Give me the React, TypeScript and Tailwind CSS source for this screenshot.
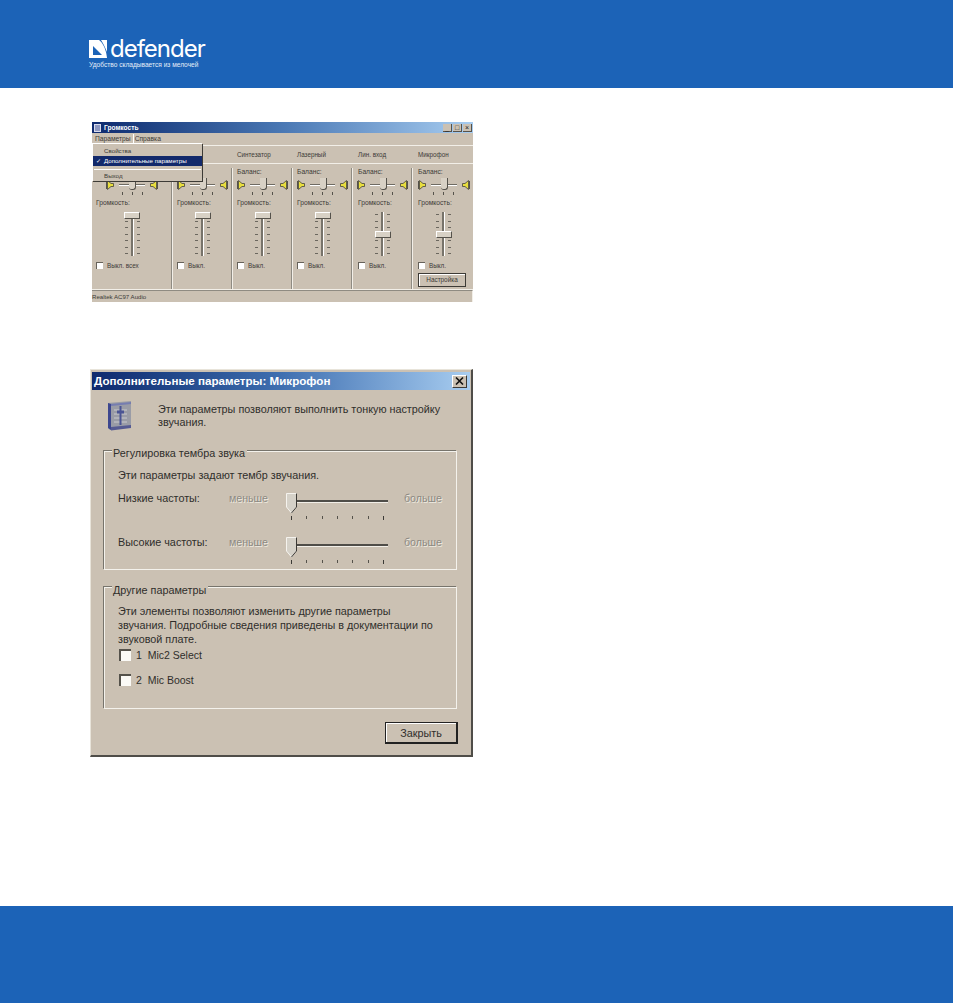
const SANS = { fontFamily: '"Liberation Sans", Arial, sans-serif' };

function Speaker({ flip }: { flip?: boolean }) {
  return (
    <svg width="8" height="10" viewBox="0 0 8 10" className={flip ? 'shrink-0 -scale-x-100' : 'shrink-0'}>
      <path d="M1.5 0.5 L5 3.5 L7.5 3.5 L7.5 6.5 L5 6.5 L1.5 9.5 Z" fill="#e8de3e" stroke="#45433a" strokeWidth="0.8" />
      <path d="M0.5 1 V9" stroke="#55524b" strokeWidth="1" />
    </svg>
  );
}

function BalanceSlider() {
  return (
    <div className="flex items-center justify-center gap-[5px] mt-[4px] h-[10px]">
      <Speaker />
      <div className="relative w-[26px] h-[10px] flex items-center">
        <div className="w-full h-[2px] bg-[#6f6b63] border-b border-white" />
        <div className="absolute left-[10px] top-[-2px] w-[7px] h-[12px] bg-[#d8d1c5] border-r border-b border-[#55524b] border-l-white border-t-white rounded-b-[3px]" />
      </div>
      <Speaker flip />
    </div>
  );
}

function VerticalSlider({ low }: { low?: boolean }) {
  const ticks = [0, 1, 2, 3, 4, 5, 6];
  return (
    <div className="relative flex justify-center gap-[3px] mt-[5px] h-[44px] w-[26px] self-center">
      <div className="flex flex-col justify-between py-[2px]">
        {ticks.map((t) => (
          <div key={t} className="w-[3px] h-px bg-[#6b675f]" />
        ))}
      </div>
      <div className="w-[3px] h-full bg-[#77736a] border-r border-white" />
      <div className="flex flex-col justify-between py-[2px]">
        {ticks.map((t) => (
          <div key={t} className="w-[3px] h-px bg-[#6b675f]" />
        ))}
      </div>
      <div
        className={
          low
            ? 'absolute left-[5px] top-[19px] w-[16px] h-[7px] bg-[#d8d1c5] border border-t-white border-l-white border-r-[#55524b] border-b-[#55524b]'
            : 'absolute left-[5px] top-[0px] w-[16px] h-[7px] bg-[#d8d1c5] border border-t-white border-l-white border-r-[#55524b] border-b-[#55524b]'
        }
      />
    </div>
  );
}

function MixerColumn({
  off,
  low,
  wide,
  last,
  covered,
}: {
  off: string;
  low?: boolean;
  wide?: boolean;
  last?: boolean;
  covered?: boolean;
}) {
  const nudge = low ? 'ml-px ' : '';
  return (
    <div
      className={
        (wide ? 'w-[80px] pl-[4px] ' : last ? 'w-[61px] pl-[5px] ' : 'w-[60px] pl-[5px] ') +
        (last ? '' : 'border-r border-[#8f8b82] shadow-[1px_0_0_#f2efe8] ') +
        'pr-[3px] flex flex-col h-full'
      }
    >
      {/* the open menu lies over the first two labels */}
      <div className={nudge + 'h-[8px] leading-[8px]'}>{covered ? '' : 'Баланс:'}</div>
      <BalanceSlider />
      <div className="flex justify-center gap-[9px] h-[3px] mt-[2px]">
        {[0, 1, 2].map((t) => (
          <div key={t} className="w-px h-[3px] bg-[#55524b]" />
        ))}
      </div>
      <div className={nudge + 'h-[8px] leading-[8px] mt-[4px]'}>Громкость:</div>
      <VerticalSlider low={low} />
      <div className={nudge + 'flex items-center gap-[4px] mt-[6px] h-[7px]'}>
        <div className="w-[7px] h-[7px] bg-white border-t border-l border-[#66625a]" />
        <span className="leading-[8px] text-[6.3px]">{off}</span>
      </div>
      {last && (
        <div className="ml-px mt-[4px] w-[48px] h-[14px] flex items-center justify-center border border-[#3d3b36] shadow-[inset_1px_1px_0_#fff] text-[6.4px]">
          Настройка
        </div>
      )}
    </div>
  );
}

function MixerWindow() {
  return (
    <div
      className="relative ml-[92px] mt-[34px] w-[381px] h-[180px] bg-[#cbc1b3] text-[6.7px] text-[#3c3a36] flex flex-col"
      style={SANS}
    >
      <div className="h-[11px] bg-gradient-to-r from-[#0f2a6e] via-[#4a78b4] to-[#a8cdf0] flex items-center pl-[2px] pr-[1px]">
        <div className="w-[7px] h-[8px] bg-[#8d97c0] border border-[#d9dcec]" />
        <span className="ml-[3px] font-bold text-white text-[6.6px]">Громкость</span>
        <div className="ml-auto flex gap-px">
          {['_', '□', '×'].map((c) => (
            <div
              key={c}
              className="w-[9px] h-[8px] bg-[#cbc1b3] border-r border-b border-[#55524b] text-[#222] text-[7px] leading-[7px] text-center"
            >
              {c}
            </div>
          ))}
        </div>
      </div>
      <div className="h-[13px] flex items-center pl-[1px] border-b border-[#f2efe8]">
        <div className="h-[10px] px-[2px] leading-[10px] border-r border-b border-white">Параметры</div>
        <span className="ml-[1px]">Справка</span>
      </div>
      <div className="h-[18px] flex items-center border-b border-[#f2efe8] text-[6.3px]">
        <div className="w-[140px]" />
        <span className="w-[60px] pl-[5px]">Синтезатор</span>
        <span className="w-[60px] pl-[5px]">Лазерный</span>
        <span className="w-[60px] pl-[6px]">Лин. вход</span>
        <span className="w-[60px] pl-[6px]">Микрофон</span>
      </div>
      <div className="flex-1 flex pt-[4px] border-b border-[#f2efe8]">
        <MixerColumn wide covered off="Выкл. всех" />
        <MixerColumn covered off="Выкл." />
        <MixerColumn off="Выкл." />
        <MixerColumn off="Выкл." />
        <MixerColumn off="Выкл." low />
        <MixerColumn off="Выкл." low last />
      </div>
      <div className="h-[12px] leading-[12px] border-r border-[#f2efe8] border-t border-t-[#8f8b82] text-[6.1px]">
        Realtek AC97 Audio
      </div>

      <div className="absolute left-0 top-[21px] w-[110px] h-[38px] bg-[#cbc1b3] border-t border-l border-white shadow-[1px_1px_0_#3d3b36] pt-[2px] text-[6.2px]">
        <div className="h-[10px] leading-[10px] pl-[11px]">Свойства</div>
        <div className="h-[10px] leading-[10px] pl-[3px] bg-[#12296b] text-white">
          <span className="inline-block w-[8px]">✓</span>Дополнительные параметры
        </div>
        <div className="h-px bg-[#8f8b82] mt-[3px] mb-[1px] mx-[1px] border-b border-white" />
        <div className="h-[10px] leading-[10px] pl-[11px] mt-[1px]">Выход</div>
      </div>
    </div>
  );
}

function BookIcon() {
  return (
    <svg width="25" height="31" viewBox="0 0 25 31" className="ml-[15px] mt-[31px] shrink-0">
      <path d="M1 3 L24 1 L24 27 L3 30 L1 28 Z" fill="#9a9ca6" />
      <path d="M1 3 L4 4 L4 30 L1 28 Z" fill="#3d478f" />
      <path d="M4 4 L24 2 L24 4 L4 6 Z" fill="#767db0" />
      <path d="M4 27 L24 25 L24 28 L4 30.5 Z" fill="#555a92" />
      <path d="M7 10h13M7 14h13M7 18h13M7 22h13" stroke="#c9c9ce" strokeWidth="1" />
      <path d="M13.5 6v19" stroke="#4a5494" strokeWidth="2" />
      <path d="M10 12h7" stroke="#4a5494" strokeWidth="3" />
    </svg>
  );
}

function HorizontalSlider() {
  return (
    <div className="relative w-[102px] h-[21px] mt-[2px]">
      <div className="absolute left-[4px] top-[7px] w-[98px] h-[3px] bg-[#4f4d48] border-b border-[#f2efe8]" />
      <svg width="11" height="21" viewBox="0 0 11 21" className="absolute left-0 top-0">
        <path d="M0.5 0.5 H10.5 V14 L5.5 20 L0.5 14 Z" fill="#d5d1c8" stroke="#f5f3ee" />
        <path d="M10.5 0.5 V14 L5.5 20" fill="none" stroke="#3c3a36" />
      </svg>
    </div>
  );
}

function ToneRow({ label, top }: { label: string; top: string }) {
  return (
    <div className={'flex items-start ' + top}>
      <span className="w-[111px] text-[#2f2e2b]">{label}</span>
      <span className="w-[57px] text-[#8d8a83] text-[10.6px] [text-shadow:1px_1px_0_#eee9df]">меньше</span>
      <div>
        <HorizontalSlider />
        <div className="flex justify-between items-start w-[93px] ml-[5px] mt-[2px] h-[4px]">
          {[0, 1, 2, 3, 4, 5, 6].map((t) => (
            <div key={t} className={t === 0 || t === 6 ? 'w-px h-[4px] bg-[#3c3a36]' : 'w-px h-[3px] bg-[#55524b]'} />
          ))}
        </div>
      </div>
      <span className="ml-[16px] text-[#8d8a83] text-[10.6px] [text-shadow:1px_1px_0_#eee9df]">больше</span>
    </div>
  );
}

function Group({
  legend,
  legendTop,
  className,
  children,
}: {
  legend: string;
  legendTop: string;
  className: string;
  children: React.ReactNode;
}) {
  return (
    <div className={'relative ml-[12px] w-[353px] border border-[#f4f2ec] shadow-[-1px_-1px_0_#77746c] ' + className}>
      <span className={'absolute left-[7px] bg-[#cbc1b3] pl-px pr-[2px] leading-[14px] text-[#2f2e2b] ' + legendTop}>
        {legend}
      </span>
      {children}
    </div>
  );
}

function Check({ label, top }: { label: string; top: string }) {
  return (
    <div className={'flex items-center ' + top}>
      <div className="ml-px w-[12px] h-[12px] bg-[#fbfaf6] border-t-2 border-l-2 border-[#55524b]" />
      <span className="ml-[5px] text-[#2f2e2b] text-[10.5px] whitespace-pre">{label}</span>
    </div>
  );
}

function AdvancedWindow() {
  return (
    <div
      className="ml-[90px] mt-[67px] w-[383px] h-[388px] bg-[#cbc1b3] border-t border-l border-[#e8e4da] border-r-2 border-b-2 border-r-[#4f4d48] border-b-[#4f4d48] text-[10.8px] leading-[14px] text-[#2f2e2b] pt-[2px] pl-[1px] pr-[1px] flex flex-col"
      style={SANS}
    >
      <div className="h-[18px] bg-gradient-to-r from-[#0f2a6e] via-[#3f6fb0] to-[#a8cdf0] flex items-center pl-[2px] pr-[3px] shrink-0">
        <span className="text-white font-bold text-[11.6px]">Дополнительные параметры: Микрофон</span>
        <div className="ml-auto w-[15px] h-[13px] bg-[#cbc1b3] border border-t-white border-l-white border-r-[#3c3a36] border-b-[#3c3a36] flex items-center justify-center">
          <svg width="9" height="8" viewBox="0 0 9 8">
            <path d="M1 0.5 L8 7.5 M8 0.5 L1 7.5" stroke="#111" strokeWidth="1.6" />
          </svg>
        </div>
      </div>

      <div className="flex h-[60px] shrink-0">
        <div className="-mt-[21px]">
          <BookIcon />
        </div>
        <p className="ml-[26px] mt-[13px] w-[292px] leading-[13px]">
          Эти параметры позволяют выполнить тонкую настройку звучания.
        </p>
      </div>

      <Group
        legend="Регулировка тембра звука"
        legendTop="top-[-6px]"
        className="h-[119px] shrink-0 pl-[13px] mt-[1px]"
      >
        <p className="mt-[16px]">Эти параметры задают тембр звучания.</p>
        <ToneRow label="Низкие частоты:" top="mt-[9px]" />
        <ToneRow label="Высокие частоты:" top="mt-[15px]" />
      </Group>

      <Group legend="Другие параметры" legendTop="top-[-5px]" className="h-[122px] shrink-0 pl-[13px] mt-[17px]">
        <p className="mt-[16px] whitespace-nowrap leading-[14px]">
          Эти элементы позволяют изменить другие параметры
          <br />
          звучания. Подробные сведения приведены в документации по
          <br />
          звуковой плате.
        </p>
        <Check label="1  Mic2 Select" top="mt-[2px]" />
        <Check label="2  Mic Boost" top="mt-[11px]" />
      </Group>

      <div className="ml-[293px] mt-[13px] w-[73px] h-[22px] flex items-center justify-center border border-[#222] border-r-2 border-b-2 shadow-[inset_1px_1px_0_#fff] text-[#2f2e2b] shrink-0">
        Закрыть
      </div>
    </div>
  );
}

export default function App() {
  return (
    <div className="w-[953px] h-[1003px] bg-white flex flex-col overflow-hidden">
      <header className="h-[88px] shrink-0 bg-[#1c63b7] pl-[89px] pt-[36px]">
        <div className="flex items-center h-[25px]">
          <svg width="18" height="18" viewBox="0 0 18 18" className="shrink-0">
            <path d="M0 0 H10 C14 3 17 9 18 18 H0 Z" fill="#fff" />
            <path d="M4 6 L13 15 H4 Z" fill="#1c63b7" />
            <path d="M12 0 H18 V12 C16 7 14 3 12 0 Z" fill="#fff" />
          </svg>
          <span
            className="ml-[3px] text-white text-[24px] leading-[24px] font-normal tracking-[-1px]"
            style={{ fontFamily: 'Inter, sans-serif' }}
          >
            defender
          </span>
        </div>
        <div className="text-[#e6eef8] text-[6.6px] leading-[8px]" style={SANS}>
          Удобство складывается из мелочей
        </div>
      </header>

      <main className="flex-1 flex flex-col items-start">
        <MixerWindow />
        <AdvancedWindow />
      </main>

      <footer className="h-[97px] shrink-0 bg-[#1c63b7]" />
    </div>
  );
}
